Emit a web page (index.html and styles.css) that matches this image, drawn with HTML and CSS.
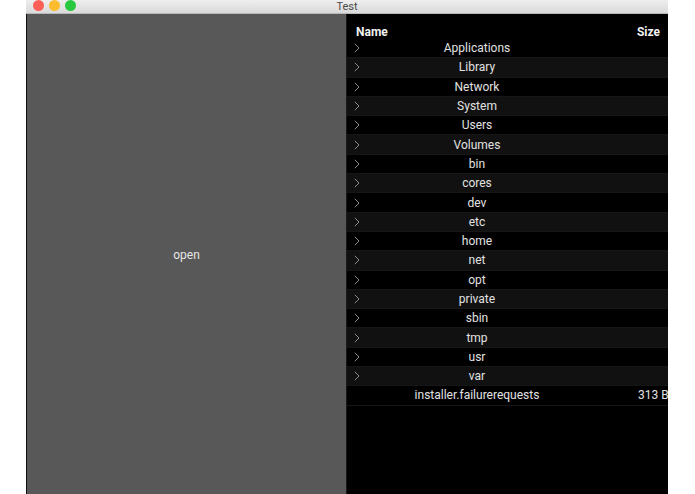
FILE: index.html
```html
<!DOCTYPE html>
<html>
<head>
<meta charset="utf-8">
<link rel="stylesheet" href="styles.css">
</head>
<body>
<div class="window">
  <div class="titlebar">
    <div class="lights">
      <span class="light red"></span>
      <span class="light yellow"></span>
      <span class="light green"></span>
    </div>
    <div class="title">Test</div>
  </div>
  <div class="content">
    <div class="left"><span class="open">open</span></div>
    <div class="right">
      <div class="header">
        <span class="h-name">Name</span>
        <span class="h-size">Size</span>
      </div>
      <div class="row"><span class="chev"><svg width="6" height="10" viewBox="0 0 6 10"><polyline points="0.8,0.8 5,5 0.8,9.2" fill="none" stroke="#8c8c8c" stroke-width="1"/></svg></span><span class="name">Applications</span><span class="size"></span></div>
      <div class="row alt"><span class="chev"><svg width="6" height="10" viewBox="0 0 6 10"><polyline points="0.8,0.8 5,5 0.8,9.2" fill="none" stroke="#8c8c8c" stroke-width="1"/></svg></span><span class="name">Library</span><span class="size"></span></div>
      <div class="row"><span class="chev"><svg width="6" height="10" viewBox="0 0 6 10"><polyline points="0.8,0.8 5,5 0.8,9.2" fill="none" stroke="#8c8c8c" stroke-width="1"/></svg></span><span class="name">Network</span><span class="size"></span></div>
      <div class="row alt"><span class="chev"><svg width="6" height="10" viewBox="0 0 6 10"><polyline points="0.8,0.8 5,5 0.8,9.2" fill="none" stroke="#8c8c8c" stroke-width="1"/></svg></span><span class="name">System</span><span class="size"></span></div>
      <div class="row"><span class="chev"><svg width="6" height="10" viewBox="0 0 6 10"><polyline points="0.8,0.8 5,5 0.8,9.2" fill="none" stroke="#8c8c8c" stroke-width="1"/></svg></span><span class="name">Users</span><span class="size"></span></div>
      <div class="row alt"><span class="chev"><svg width="6" height="10" viewBox="0 0 6 10"><polyline points="0.8,0.8 5,5 0.8,9.2" fill="none" stroke="#8c8c8c" stroke-width="1"/></svg></span><span class="name">Volumes</span><span class="size"></span></div>
      <div class="row"><span class="chev"><svg width="6" height="10" viewBox="0 0 6 10"><polyline points="0.8,0.8 5,5 0.8,9.2" fill="none" stroke="#8c8c8c" stroke-width="1"/></svg></span><span class="name">bin</span><span class="size"></span></div>
      <div class="row alt"><span class="chev"><svg width="6" height="10" viewBox="0 0 6 10"><polyline points="0.8,0.8 5,5 0.8,9.2" fill="none" stroke="#8c8c8c" stroke-width="1"/></svg></span><span class="name">cores</span><span class="size"></span></div>
      <div class="row"><span class="chev"><svg width="6" height="10" viewBox="0 0 6 10"><polyline points="0.8,0.8 5,5 0.8,9.2" fill="none" stroke="#8c8c8c" stroke-width="1"/></svg></span><span class="name">dev</span><span class="size"></span></div>
      <div class="row alt"><span class="chev"><svg width="6" height="10" viewBox="0 0 6 10"><polyline points="0.8,0.8 5,5 0.8,9.2" fill="none" stroke="#8c8c8c" stroke-width="1"/></svg></span><span class="name">etc</span><span class="size"></span></div>
      <div class="row"><span class="chev"><svg width="6" height="10" viewBox="0 0 6 10"><polyline points="0.8,0.8 5,5 0.8,9.2" fill="none" stroke="#8c8c8c" stroke-width="1"/></svg></span><span class="name">home</span><span class="size"></span></div>
      <div class="row alt"><span class="chev"><svg width="6" height="10" viewBox="0 0 6 10"><polyline points="0.8,0.8 5,5 0.8,9.2" fill="none" stroke="#8c8c8c" stroke-width="1"/></svg></span><span class="name">net</span><span class="size"></span></div>
      <div class="row"><span class="chev"><svg width="6" height="10" viewBox="0 0 6 10"><polyline points="0.8,0.8 5,5 0.8,9.2" fill="none" stroke="#8c8c8c" stroke-width="1"/></svg></span><span class="name">opt</span><span class="size"></span></div>
      <div class="row alt"><span class="chev"><svg width="6" height="10" viewBox="0 0 6 10"><polyline points="0.8,0.8 5,5 0.8,9.2" fill="none" stroke="#8c8c8c" stroke-width="1"/></svg></span><span class="name">private</span><span class="size"></span></div>
      <div class="row"><span class="chev"><svg width="6" height="10" viewBox="0 0 6 10"><polyline points="0.8,0.8 5,5 0.8,9.2" fill="none" stroke="#8c8c8c" stroke-width="1"/></svg></span><span class="name">sbin</span><span class="size"></span></div>
      <div class="row alt"><span class="chev"><svg width="6" height="10" viewBox="0 0 6 10"><polyline points="0.8,0.8 5,5 0.8,9.2" fill="none" stroke="#8c8c8c" stroke-width="1"/></svg></span><span class="name">tmp</span><span class="size"></span></div>
      <div class="row"><span class="chev"><svg width="6" height="10" viewBox="0 0 6 10"><polyline points="0.8,0.8 5,5 0.8,9.2" fill="none" stroke="#8c8c8c" stroke-width="1"/></svg></span><span class="name">usr</span><span class="size"></span></div>
      <div class="row alt"><span class="chev"><svg width="6" height="10" viewBox="0 0 6 10"><polyline points="0.8,0.8 5,5 0.8,9.2" fill="none" stroke="#8c8c8c" stroke-width="1"/></svg></span><span class="name">var</span><span class="size"></span></div>
      <div class="row"><span class="chev"></span><span class="name">installer.failurerequests</span><span class="size">313 B</span></div>
    </div>
  </div>
</div>
</body>
</html>
```
FILE: styles.css
```css
html, body {
  margin: 0;
  padding: 0;
  background: #ffffff;
}
body {
  font-family: Roboto, "Liberation Sans", sans-serif;
}
.window {
  margin-left: 26px;
  width: 642px;
  height: 494px;
  display: flex;
  flex-direction: column;
  overflow: hidden;
}
.titlebar {
  height: 14px;
  flex: none;
  background: linear-gradient(#eeeeee, #dadada);
  border-bottom: 1px solid #b8b8b8;
  box-sizing: border-box;
  position: relative;
  display: flex;
  align-items: center;
  justify-content: center;
}
.lights {
  position: absolute;
  left: 7px;
  top: 0;
  height: 11px;
  display: flex;
  gap: 5px;
  align-items: center;
}
.light {
  width: 11px;
  height: 11px;
  border-radius: 50%;
  display: block;
}
.red { background: #fc5f57; }
.yellow { background: #fdbc2e; }
.green { background: #28c840; }
.title {
  font-size: 11px;
  color: #4a4a4a;
  line-height: 14px;
}
.content {
  flex: 1;
  display: flex;
  background: #000;
  border-left: 1px solid #111;
}
.left {
  width: 320px;
  flex: none;
  background: #585858;
  border-right: 1px solid #1a1a1a;
  display: flex;
  align-items: center;
  justify-content: center;
  padding-top: 2px;
  box-sizing: border-box;
}
.open {
  font-size: 12px;
  color: #e6e6e6;
}
.right {
  flex: 1;
  background: #000;
  overflow: hidden;
  color: #e2e2e2;
  font-size: 12px;
}
.header {
  height: 25px;
  display: flex;
  align-items: flex-end;
  justify-content: space-between;
  padding: 0 8px 0 9px;
  box-sizing: border-box;
  font-weight: bold;
  color: #f2f2f2;
  line-height: 13px;
}
.row {
  height: 19.3px;
  display: grid;
  grid-template-columns: 16px 228px 1fr;
  align-items: center;
  border-bottom: 1px solid #161616;
  box-sizing: border-box;
  white-space: nowrap;
}
.row.alt {
  background: #111111;
}
.chev {
  padding-left: 7px;
  display: flex;
  align-items: center;
}
.name {
  text-align: center;
}
.size {
  padding-left: 47px;
}
```
